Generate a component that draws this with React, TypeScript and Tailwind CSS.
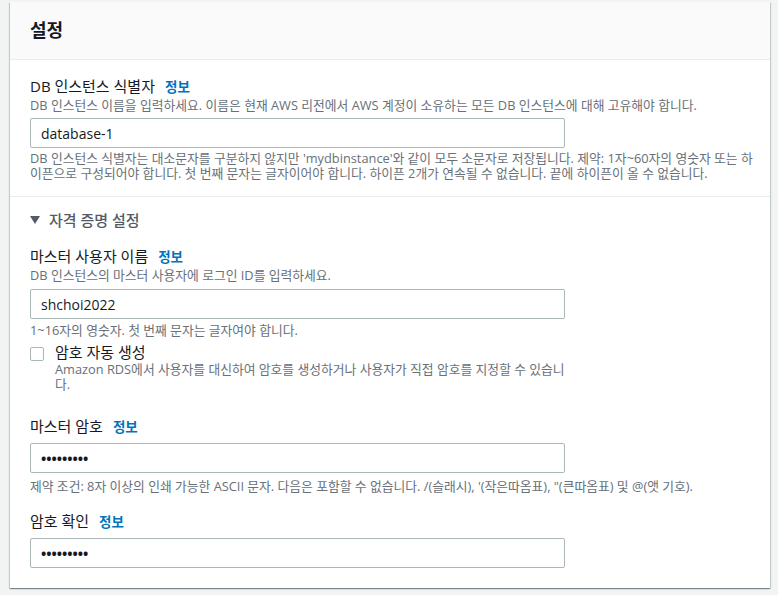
import React from 'react';

const font = { fontFamily: '"Open Sans", "Noto Sans CJK KR", sans-serif' };

function Label({ text }: { text: string }) {
  return (
    <div className="text-[15px] leading-[20px] text-[#16191f]">
      {text}
      <a className="ml-[10px] text-[13.5px] font-bold text-[#0073bb]">정보</a>
    </div>
  );
}

function Field({ value, password }: { value: string; password?: boolean }) {
  return (
    <div className="flex h-[30px] w-[535px] items-center rounded-[2px] border border-[#aab7b8] bg-white px-[10px] text-[14px] text-[#16191f]">
      {password ? <span className="text-[14px] font-bold">{value}</span> : value}
    </div>
  );
}

export default function App() {
  return (
    <div style={font} className="h-[595px] overflow-hidden bg-[#f2f3f3] pl-[10px] pt-[2px]">
      <div className="w-[760px] bg-white shadow-[0_1px_1px_0_rgba(0,28,36,0.3),1px_1px_1px_0_rgba(0,28,36,0.15),-1px_1px_1px_0_rgba(0,28,36,0.15)]">
        <div className="flex h-[58px] items-center border-b border-[#eaeded] bg-[#fafafa] px-5">
          <h2 className="text-[18px] font-bold text-[#16191f]">설정</h2>
        </div>

        <div className="border-b border-[#eaeded] px-5 pb-[15px] pt-[16px]">
          <Label text="DB 인스턴스 식별자" />
          <p className="text-[12.8px] leading-[16px] text-[#687078]">
            DB 인스턴스 이름을 입력하세요. 이름은 현재 AWS 리전에서 AWS 계정이 소유하는 모든 DB 인스턴스에 대해 고유해야 합니다.
          </p>
          <div className="mt-[5px]">
            <Field value="database-1" />
          </div>
          <p className="mt-[3px] w-[725px] text-[12.8px] leading-[15px] text-[#687078]">
            DB 인스턴스 식별자는 대소문자를 구분하지 않지만 'mydbinstance'와 같이 모두 소문자로 저장됩니다. 제약: 1자~60자의 영숫자 또는 하이픈으로 구성되어야 합니다. 첫 번째 문자는 글자이어야 합니다. 하이픈 2개가 연속될 수 없습니다. 끝에 하이픈이 올 수 없습니다.
          </p>
        </div>

        <div className="px-5 pb-[20px] pt-[13px]">
          <div className="flex items-center text-[15px] font-medium leading-[20px] text-[#545b64]">
            <svg width="10" height="8" viewBox="0 0 10 8" className="mr-[9px]">
              <path d="M0 0h10L5 8z" fill="#545b64" />
            </svg>
            자격 증명 설정
          </div>

          <div className="mt-[16px]">
            <Label text="마스터 사용자 이름" />
            <p className="text-[12.8px] leading-[16px] text-[#687078]">DB 인스턴스의 마스터 사용자에 로그인 ID를 입력하세요.</p>
            <div className="mt-[6px]">
              <Field value="shchoi2022" />
            </div>
            <p className="mt-[3px] text-[12.8px] leading-[16px] text-[#687078]">1~16자의 영숫자. 첫 번째 문자는 글자여야 합니다.</p>
          </div>

          <div className="mt-[4px] flex">
            <div className="mt-[5px] h-[14px] w-[14px] shrink-0 rounded-[2px] border border-[#aab7b8] bg-white" />
            <div className="ml-[11px]">
              <div className="text-[15px] leading-[20px] text-[#16191f]">암호 자동 생성</div>
              <p className="w-[510px] text-[12.8px] leading-[15px] text-[#687078]">
                Amazon RDS에서 사용자를 대신하여 암호를 생성하거나 사용자가 직접 암호를 지정할 수 있습니다.
              </p>
            </div>
          </div>

          <div className="mt-[24px]">
            <Label text="마스터 암호" />
            <div className="mt-[6px]">
              <Field value="•••••••••" password />
            </div>
            <p className="mt-[5px] text-[12.8px] leading-[16px] text-[#687078]">
              제약 조건: 8자 이상의 인쇄 가능한 ASCII 문자. 다음은 포함할 수 없습니다. /(슬래시), '(작은따옴표), "(큰따옴표) 및 @(앳 기호).
            </p>
          </div>

          <div className="mt-[17px]">
            <Label text="암호 확인" />
            <div className="mt-[6px]">
              <Field value="•••••••••" password />
            </div>
          </div>
        </div>
      </div>
    </div>
  );
}
